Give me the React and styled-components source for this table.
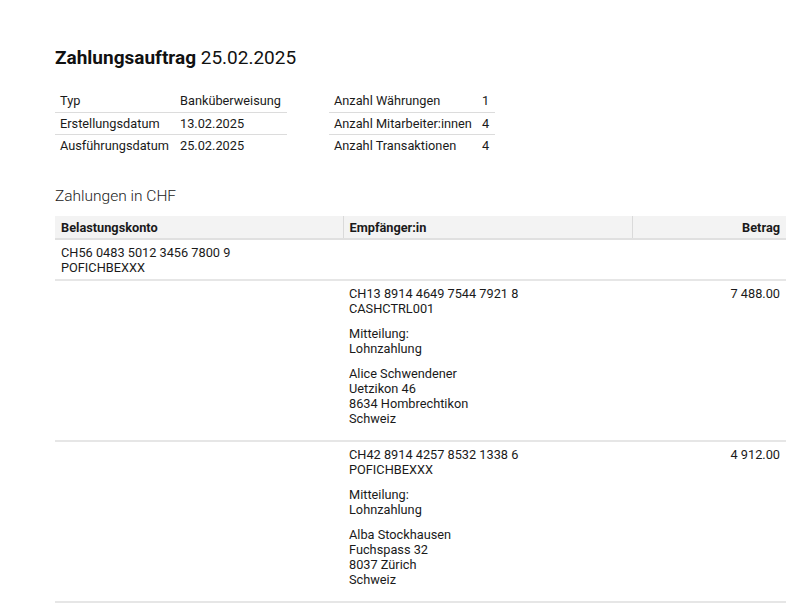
import React from "react";
import styled, { createGlobalStyle } from "styled-components";

const GlobalStyle = createGlobalStyle`
  body {
    margin: 0;
    background: #ffffff;
    font-family: Roboto, "Liberation Sans", sans-serif;
    color: #1a1a1a;
  }
`;

const summaryLeft = [
  ["Typ", "Banküberweisung"],
  ["Erstellungsdatum", "13.02.2025"],
  ["Ausführungsdatum", "25.02.2025"],
];

const summaryRight = [
  ["Anzahl Währungen", "1"],
  ["Anzahl Mitarbeiter:innen", "4"],
  ["Anzahl Transaktionen", "4"],
];

const payments = [
  {
    iban: "CH13 8914 4649 7544 7921 8",
    bic: "CASHCTRL001",
    message: "Lohnzahlung",
    address: ["Alice Schwendener", "Uetzikon 46", "8634 Hombrechtikon", "Schweiz"],
    amount: "7 488.00",
  },
  {
    iban: "CH42 8914 4257 8532 1338 6",
    bic: "POFICHBEXXX",
    message: "Lohnzahlung",
    address: ["Alba Stockhausen", "Fuchspass 32", "8037 Zürich", "Schweiz"],
    amount: "4 912.00",
  },
];

export default function App() {
  return (
    <>
      <GlobalStyle />
      <Page>
        <Title>
          <strong>Zahlungsauftrag</strong> 25.02.2025
        </Title>

        <Summary>
          <InfoTable $width={232}>
            <tbody>
              {summaryLeft.map(([label, value]) => (
                <InfoRow key={label}>
                  <InfoLabel $width={120}>{label}</InfoLabel>
                  <InfoValue>{value}</InfoValue>
                </InfoRow>
              ))}
            </tbody>
          </InfoTable>
          <InfoTable $width={166}>
            <tbody>
              {summaryRight.map(([label, value]) => (
                <InfoRow key={label}>
                  <InfoLabel>{label}</InfoLabel>
                  <InfoValue>{value}</InfoValue>
                </InfoRow>
              ))}
            </tbody>
          </InfoTable>
        </Summary>

        <SectionTitle>Zahlungen in CHF</SectionTitle>

        <PaymentTable>
          <colgroup>
            <col style={{ width: 288 }} />
            <col style={{ width: 289 }} />
            <col />
          </colgroup>
          <thead>
            <tr>
              <HeadCell>Belastungskonto</HeadCell>
              <HeadCell>Empfänger:in</HeadCell>
              <HeadCell $right>Betrag</HeadCell>
            </tr>
          </thead>
          <tbody>
            <BodyRow>
              <Cell>
                <Line>CH56 0483 5012 3456 7800 9</Line>
                <Line>POFICHBEXXX</Line>
              </Cell>
              <Cell />
              <Cell />
            </BodyRow>
            {payments.map((p) => (
              <BodyRow key={p.iban}>
                <Cell />
                <Cell>
                  <Block>
                    <Line>{p.iban}</Line>
                    <Line>{p.bic}</Line>
                  </Block>
                  <Block>
                    <Line>Mitteilung:</Line>
                    <Line>{p.message}</Line>
                  </Block>
                  <Block>
                    {p.address.map((a) => (
                      <Line key={a}>{a}</Line>
                    ))}
                  </Block>
                </Cell>
                <Cell $right>{p.amount}</Cell>
              </BodyRow>
            ))}
          </tbody>
        </PaymentTable>
      </Page>
    </>
  );
}

const Page = styled.div`
  padding: 44px 14px 0 55px;
`;

const Title = styled.h1`
  margin: 0;
  font-size: 19px;
  font-weight: 400;
  line-height: 28px;
  color: #111;

  strong {
    font-weight: 700;
  }
`;

const Summary = styled.div`
  display: flex;
  gap: 42px;
  margin-top: 18px;
`;

const InfoTable = styled.table`
  width: ${(p) => p.$width}px;
  border-collapse: collapse;
  font-size: 12.75px;
`;

const InfoRow = styled.tr`
  height: 22px;
  border-bottom: 1px solid #dcdcdc;

  &:last-child {
    border-bottom: none;
  }
`;

const InfoLabel = styled.td`
  padding: 0 0 0 5px;
  white-space: nowrap;
  width: ${(p) => (p.$width ? `${p.$width}px` : "auto")};
`;

const InfoValue = styled.td`
  padding: 0 5px 0 0;
  white-space: nowrap;
`;

const SectionTitle = styled.h2`
  margin: 29px 0 0;
  font-size: 15.5px;
  font-weight: 300;
  line-height: 22px;
  color: #222;
`;

const PaymentTable = styled.table`
  width: 731px;
  margin-top: 9px;
  border-collapse: collapse;
  table-layout: fixed;
  font-size: 12.75px;
`;

const HeadCell = styled.th`
  height: 22px;
  padding: 0 6px;
  background: #f3f3f3;
  border-bottom: 2px solid #e0e0e0;
  border-left: 1px solid #dadada;
  text-align: ${(p) => (p.$right ? "right" : "left")};
  font-weight: 700;

  &:first-child {
    border-left: none;
  }
`;

const BodyRow = styled.tr`
  border-bottom: 2px solid #e6e6e6;
`;

const Cell = styled.td`
  vertical-align: top;
  padding: 5px 6px 4px 6px;
  line-height: 15px;
  text-align: ${(p) => (p.$right ? "right" : "left")};
`;

const Block = styled.div`
  margin-bottom: 10px;
`;

const Line = styled.div``;
